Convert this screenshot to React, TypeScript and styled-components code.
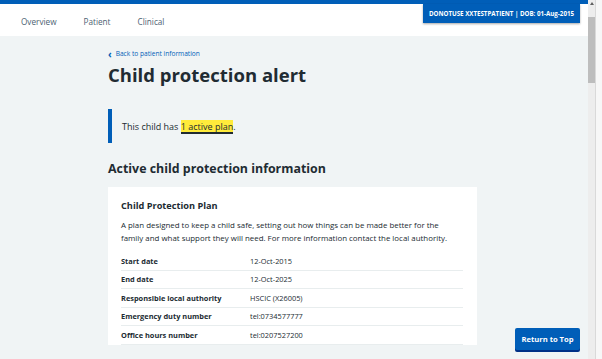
import styled, { createGlobalStyle } from "styled-components";

const GlobalStyle = createGlobalStyle`
  html, body {
    margin: 0;
    padding: 0;
    overflow: hidden;
  }
  body {
    font-family: "Open Sans", "Noto Sans", Arial, sans-serif;
    color: #212b32;
  }
`;

const nav = ["Overview", "Patient", "Clinical"];

const rows = [
  { key: "Start date", value: "12-Oct-2015" },
  { key: "End date", value: "12-Oct-2025" },
  { key: "Responsible local authority", value: "HSCIC (X26005)" },
  { key: "Emergency duty number", value: "tel:0734577777" },
  { key: "Office hours number", value: "tel:0207527200" },
];

export default function App() {
  return (
    <>
      <GlobalStyle />
      <Window>
        <Main>
          <TopBar />
          <Header>
            <Nav>
              {nav.map((item) => (
                <NavItem key={item}>{item}</NavItem>
              ))}
            </Nav>
            <Banner>DONOTUSE XXTESTPATIENT | DOB: 01-Aug-2015</Banner>
          </Header>
          <Content>
            <Container>
              <BackLink>
                <Chevron>‹</Chevron>Back to patient information
              </BackLink>
              <H1>Child protection alert</H1>
              <Inset>
                <span>
                  This child has <Mark>1 active plan</Mark>.
                </span>
              </Inset>
              <H2>Active child protection information</H2>
              <Card>
                <CardTitle>Child Protection Plan</CardTitle>
                <CardText>
                  A plan designed to keep a child safe, setting out how things can be made better for the
                  family and what support they will need. For more information contact the local authority.
                </CardText>
                <List>
                  {rows.map((r) => (
                    <Row key={r.key}>
                      <Key>{r.key}</Key>
                      <Value>{r.value}</Value>
                    </Row>
                  ))}
                </List>
              </Card>
            </Container>
          </Content>
          <TopButton>Return to Top</TopButton>
        </Main>
        <Scrollbar>
          <Track>
            <Arrow />
            <Thumb />
          </Track>
          <Gutter />
        </Scrollbar>
      </Window>
    </>
  );
}

const Window = styled.div`
  display: flex;
  width: 602px;
  height: 359px;
  overflow: hidden;
`;

const Main = styled.div`
  position: relative;
  flex: 1;
  display: flex;
  flex-direction: column;
  background: #f0f4f5;
`;

const TopBar = styled.div`
  height: 4px;
  background: #005eb8;
`;

const Header = styled.div`
  height: 32px;
  background: #fff;
  display: flex;
  justify-content: space-between;
  align-items: flex-start;
  padding: 0 8px 0 21px;
`;

const Nav = styled.div`
  display: flex;
  gap: 27px;
  padding-top: 12px;
`;

const NavItem = styled.div`
  font-size: 8.2px;
  line-height: 12px;
  color: #4c6272;
`;

const Banner = styled.div`
  background: #005eb8;
  color: #fff;
  font-size: 6.2px;
  font-weight: 700;
  height: 19px;
  line-height: 19px;
  padding: 0 6px;
  box-shadow: 0 1px 2px rgba(0, 0, 0, 0.35);
`;

const Content = styled.div`
  flex: 1;
`;

const Container = styled.div`
  width: 372px;
  margin: 0 auto;
  padding-top: 13px;
`;

const BackLink = styled.div`
  font-size: 6.6px;
  line-height: 10px;
  color: #005eb8;
  display: flex;
  align-items: center;
`;

const Chevron = styled.span`
  font-size: 10px;
  font-weight: 700;
  margin-right: 4px;
  line-height: 10px;
`;

const H1 = styled.h1`
  margin: 3px 0 0;
  font-size: 18.5px;
  line-height: 26px;
  font-weight: 700;
`;

const Inset = styled.div`
  margin-top: 21px;
  border-left: 4px solid #005eb8;
  padding-left: 10px;
  height: 34px;
  display: flex;
  align-items: center;
  font-size: 9px;
`;

const Mark = styled.span`
  background: #ffeb3b;
  box-shadow: inset 0 -2px 0 #212b32;
  padding-bottom: 1px;
`;

const H2 = styled.h2`
  margin: 17px 0 0;
  font-size: 12.4px;
  line-height: 18px;
  font-weight: 700;
`;

const Card = styled.div`
  width: 369px;
  box-sizing: border-box;
  margin-top: 9px;
  background: #fff;
  padding: 12px 14px 0 13px;
`;

const CardTitle = styled.div`
  font-size: 9.2px;
  font-weight: 700;
  line-height: 14px;
`;

const CardText = styled.p`
  margin: 6px 0 0;
  font-size: 7.9px;
  line-height: 13px;
  color: #212b32;
`;

const List = styled.div`
  margin-top: 7px;
`;

const Row = styled.div`
  display: grid;
  grid-template-columns: 129px 1fr;
  box-sizing: border-box;
  height: 18.5px;
  align-items: center;
  border-bottom: 1px solid #e8edee;
  font-size: 7.4px;
`;

const Key = styled.div`
  font-weight: 700;
`;

const Value = styled.div``;

const TopButton = styled.button`
  position: absolute;
  right: 8px;
  bottom: 9px;
  width: 65px;
  height: 22px;
  border: 0;
  border-radius: 2px;
  background: #005eb8;
  color: #fff;
  font-family: inherit;
  font-size: 7.6px;
  font-weight: 700;
  box-shadow: 0 2px 0 #003087;
  padding: 0;
`;

const Scrollbar = styled.div`
  width: 14px;
  display: flex;
  background: #f7f7f7;
`;

const Track = styled.div`
  width: 7px;
  display: flex;
  flex-direction: column;
  background: #ededed;
  border-right: 1px solid #d9d9d9;
`;

const Arrow = styled.div`
  width: 0;
  height: 0;
  margin: 2px auto 0;
  border-left: 2px solid transparent;
  border-right: 2px solid transparent;
  border-bottom: 3px solid #606060;
`;

const Thumb = styled.div`
  margin-top: 12px;
  height: 66px;
  background: #bdbdbd;
`;

const Gutter = styled.div`
  flex: 1;
`;
